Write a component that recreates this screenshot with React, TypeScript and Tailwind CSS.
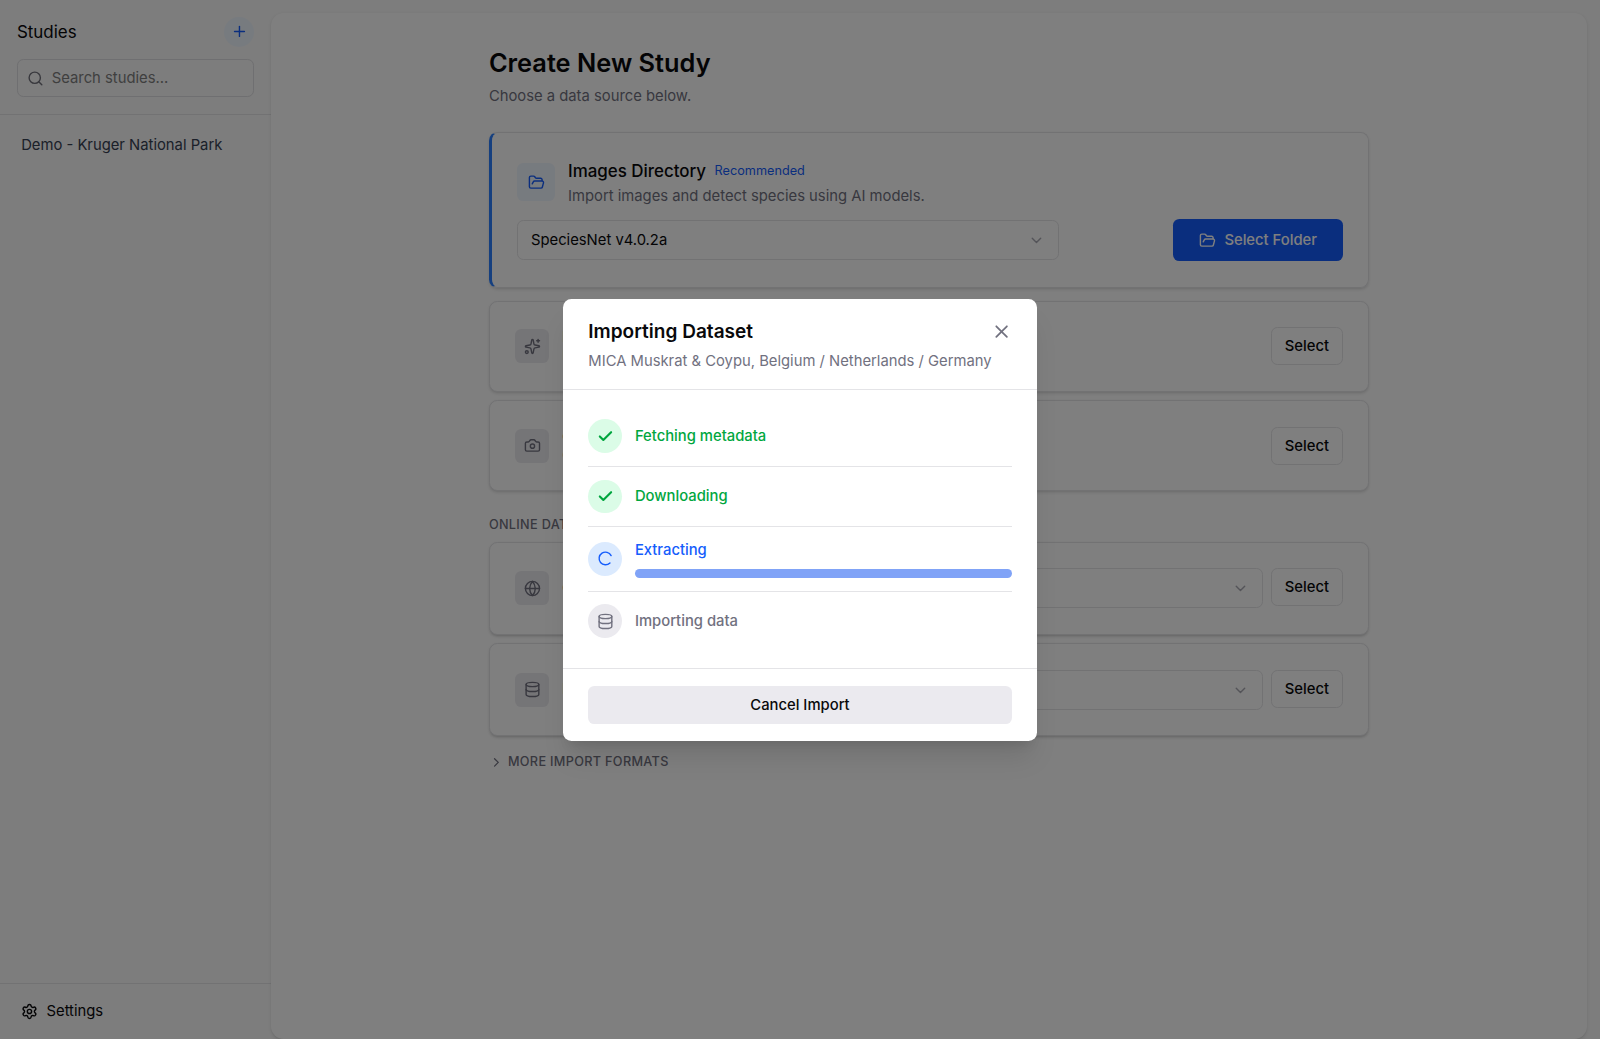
import React from 'react';
import {
  Camera,
  Check,
  ChevronDown,
  ChevronRight,
  Database,
  FolderOpen,
  Globe,
  Loader2,
  Plus,
  Search,
  Settings,
  Sparkles,
  X,
  type LucideIcon,
} from 'lucide-react';
import { clsx } from 'clsx';

type StepStatus = 'done' | 'active' | 'pending';

interface Step {
  label: string;
  status: StepStatus;
  icon: LucideIcon;
}

const steps: Step[] = [
  { label: 'Fetching metadata', status: 'done', icon: Check },
  { label: 'Downloading', status: 'done', icon: Check },
  { label: 'Extracting', status: 'active', icon: Loader2 },
  { label: 'Importing data', status: 'pending', icon: Database },
];

const Sidebar = () => (
  <aside className="flex w-64 shrink-0 flex-col">
    <div className="flex flex-col gap-3 border-b border-[#e4e4e7] p-4">
      <div className="flex items-center justify-between">
        <h2 className="pt-px text-base text-[#09090b]">Studies</h2>
        <button className="flex size-7 items-center justify-center rounded-full bg-blue-50 text-blue-600">
          <Plus size={16} />
        </button>
      </div>
      <div className="flex h-9 items-center gap-[7px] rounded-md border border-[#dfdfe2] pl-[9px]">
        <Search size={16} className="text-[#71717b]" />
        <span className="pt-px text-sm text-[#7f7f7f]">Search studies...</span>
      </div>
    </div>
    <nav className="flex-1 px-2 pt-[11px]">
      <div className="rounded-md px-3 py-2 text-sm text-gray-700">Demo - Kruger National Park</div>
    </nav>
    <div className="border-t border-[#e4e4e7] p-2">
      <div className="flex h-9 items-center gap-2 px-3 text-sm text-[#09090b]">
        <Settings size={16} />
        <span className="pt-px">Settings</span>
      </div>
    </div>
  </aside>
);

const IconTile = ({ icon: Icon }: { icon: LucideIcon }) => (
  <div className="flex size-8 shrink-0 items-center justify-center rounded-md bg-[#ebeaef] text-[#71717f]">
    <Icon size={16} />
  </div>
);

const SelectButton = () => (
  <button className="h-9 w-[68px] rounded-md border border-[#e4e4e7] pt-px text-sm font-medium text-[#09090b]">
    Select
  </button>
);

const Dropdown = ({ value, className }: { value: string; className?: string }) => (
  <div
    className={clsx(
      'flex h-[38px] items-center justify-between rounded-md border border-[#e4e4e7] px-3 pt-px text-sm text-[#09090b]',
      className,
    )}
  >
    {value}
    <ChevronDown size={16} className="text-[#71717f] opacity-60" />
  </div>
);

const SourceCard = ({
  icon,
  title,
  description,
}: {
  icon: LucideIcon;
  title: string;
  description: string;
}) => (
  <div className="flex items-center gap-[12.5px] rounded-lg border border-[#e4e4e7] bg-white p-6 shadow-sm">
    <IconTile icon={icon} />
    <div className="flex-1">
      <h3 className="text-sm font-medium text-[#09090b]">{title}</h3>
      <p className="text-xs text-[#71717f]">{description}</p>
    </div>
    <SelectButton />
  </div>
);

const OnlineCard = ({ icon, title, dataset }: { icon: LucideIcon; title: string; dataset: string }) => (
  <div className="flex items-center gap-[12.5px] rounded-lg border border-[#e4e4e7] bg-white p-6 shadow-sm">
    <IconTile icon={icon} />
    <h3 className="w-20 text-sm font-medium text-[#09090b]">{title}</h3>
    <div className="flex flex-1 items-start gap-2">
      <Dropdown value={dataset} className="flex-1" />
      <SelectButton />
    </div>
  </div>
);

const ImportPage = () => (
  <main className="mt-3 mr-3 flex-1 rounded-xl bg-white shadow-sm">
    <div className="mx-auto w-[896px] px-8 pt-[32.5px] pb-8">
      <h1 className="text-2xl leading-[31px] font-semibold text-[#09090b]">Create New Study</h1>
      <p className="mt-1.5 mb-[23px] text-sm text-[#71717f]">Choose a data source below.</p>

      <section className="mb-3 flex flex-col gap-[11.5px] rounded-lg border border-l-3 border-[#e4e4e7] border-l-blue-500 px-6 pt-6 pb-[24.5px] shadow-sm">
        <div className="flex items-center gap-3">
          <div className="flex size-9 items-center justify-center rounded-md bg-blue-50 text-blue-600">
            <FolderOpen size={16} />
          </div>
          <div>
            <h3 className="flex items-center gap-2 pt-px text-base font-medium text-[#09090b]">
              Images Directory
              <span className="text-xs font-normal text-blue-600">Recommended</span>
            </h3>
            <p className="mt-px text-sm text-[#71717f]">Import images and detect species using AI models.</p>
          </div>
        </div>
        <div className="flex items-center justify-between">
          <Dropdown value="SpeciesNet v4.0.2a" className="w-lg" />
          <button className="flex h-10 w-[160.5px] items-center justify-center gap-2 rounded-md bg-blue-600 text-sm font-medium text-white">
            <FolderOpen size={16} />
            <span className="pt-px">Select Folder</span>
          </button>
        </div>
      </section>

      <div className="flex flex-col gap-2">
        <SourceCard icon={Sparkles} title="Images" description="Import samples" />
        <SourceCard icon={Camera} title="Camtrap DP" description="Camera trap data package" />
      </div>

      <h4 className="mt-[25px] mb-[7px] text-xs font-medium tracking-wide text-[#71717f]">ONLINE DATASETS</h4>
      <div className="flex flex-col gap-2">
        <OnlineCard icon={Globe} title="GBIF" dataset="MICA Muskrat & Coypu" />
        <OnlineCard icon={Database} title="LILA" dataset="Select a dataset" />
      </div>

      <div className="mt-[17px] flex items-center gap-1 text-xs font-medium tracking-wide text-[#71717f]">
        <ChevronRight size={14} />
        MORE IMPORT FORMATS
      </div>
    </div>
  </main>
);

const StepRow = ({ step }: { step: Step }) => {
  const Icon = step.icon;
  return (
    <li className="flex items-center gap-3 border-b border-[#e4e4e7] py-3 last:border-b-0">
      <div
        className={clsx(
          'flex size-8 shrink-0 items-center justify-center rounded-full',
          step.status === 'done' && 'bg-green-100 text-green-600',
          step.status === 'active' && 'bg-blue-100 text-blue-600',
          step.status === 'pending' && 'bg-[#ebeaef] text-[#71717f]',
        )}
      >
        <Icon
          size={16}
          strokeWidth={step.status === 'done' ? 3 : 2}
          className={clsx(step.status === 'active' && 'rotate-45')}
        />
      </div>
      <div className="flex flex-1 flex-col gap-[7.5px]">
        <span
          className={clsx(
            'pt-[0.5px] text-sm font-medium',
            step.status === 'done' && 'text-green-600',
            step.status === 'active' && 'text-blue-600',
            step.status === 'pending' && 'text-[#71717f]',
          )}
        >
          {step.label}
        </span>
        {step.status === 'active' && <div className="h-2 rounded-full bg-[#80a3f7]" />}
      </div>
    </li>
  );
};

const ImportDialog = () => (
  <div className="w-md rounded-lg bg-white shadow-xl">
    <header className="border-b border-[#e4e4e7] px-6 pt-4 pb-[15.5px]">
      <div className="flex items-center justify-between">
        <h2 className="pt-[0.5px] text-lg leading-[27.5px] font-semibold text-[#09090b]">Importing Dataset</h2>
        <X size={20} className="-mr-[0.5px] text-[#71717f]" />
      </div>
      <p className="mt-[5px] text-sm text-[#71717f]">MICA Muskrat & Coypu, Belgium / Netherlands / Germany</p>
    </header>
    <ul className="px-6 py-4">
      {steps.map(step => (
        <StepRow key={step.label} step={step} />
      ))}
    </ul>
    <footer className="border-t border-[#e4e4e7] px-6 py-4">
      <button className="h-9 w-full rounded-md bg-[#ebeaef] pt-px text-sm font-medium text-[#09090b]">
        Cancel Import
      </button>
    </footer>
  </div>
);

export default function App() {
  return (
    // The whole window runs slightly enlarged: 1512 layout px across 1600 screen px
    <div className="relative h-[981.8px] w-[1512px] overflow-hidden bg-[#fafafa] font-['Inter',sans-serif] [zoom:1.0582]">
      <div className="flex h-full">
        <Sidebar />
        <ImportPage />
      </div>
      <div className="absolute inset-0 flex items-center justify-center bg-black/50 pt-px">
        <ImportDialog />
      </div>
    </div>
  );
}
